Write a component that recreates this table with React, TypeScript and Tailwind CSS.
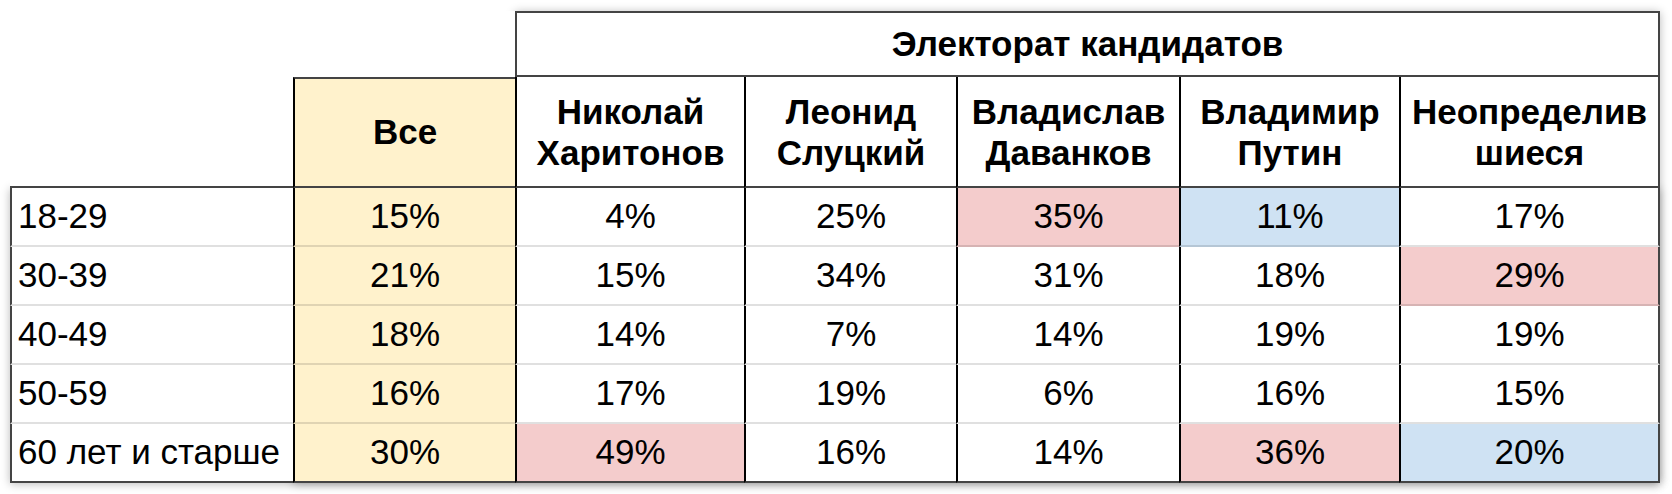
import React from 'react';

type Tone = 'pink' | 'blue' | undefined;

const candidates = [
  ['Николай', 'Харитонов'],
  ['Леонид', 'Слуцкий'],
  ['Владислав', 'Даванков'],
  ['Владимир', 'Путин'],
  ['Неопределив', 'шиеся'],
];

const rows: { age: string; all: string; values: [string, Tone][] }[] = [
  {
    age: '18-29',
    all: '15%',
    values: [['4%', undefined], ['25%', undefined], ['35%', 'pink'], ['11%', 'blue'], ['17%', undefined]],
  },
  {
    age: '30-39',
    all: '21%',
    values: [['15%', undefined], ['34%', undefined], ['31%', undefined], ['18%', undefined], ['29%', 'pink']],
  },
  {
    age: '40-49',
    all: '18%',
    values: [['14%', undefined], ['7%', undefined], ['14%', undefined], ['19%', undefined], ['19%', undefined]],
  },
  {
    age: '50-59',
    all: '16%',
    values: [['17%', undefined], ['19%', undefined], ['6%', undefined], ['16%', undefined], ['15%', undefined]],
  },
  {
    age: '60 лет и старше',
    all: '30%',
    values: [['49%', 'pink'], ['16%', undefined], ['14%', undefined], ['36%', 'pink'], ['20%', 'blue']],
  },
];

const toneClass = (tone: Tone) => {
  if (tone === 'pink') return 'bg-[#f4cccc]';
  if (tone === 'blue') return 'bg-[#cfe2f3]';
  return 'bg-white';
};

export default function App() {
  return (
    <div
      className="min-h-[494px] bg-white pl-[10px] pt-[11px] text-black"
      style={{ fontFamily: '"Liberation Sans", Arial, sans-serif' }}
    >
      <div className="grid grid-cols-[283px_222px_229px_212px_223px_220px_261px] grid-rows-[66px_111px_59px_59px_59px_59px_59px] text-[35px]">
        {/* shadow layers, painted under the cells */}
        <div className="col-start-3 col-span-5 row-start-1 row-span-7 shadow-[0_1px_9px_rgba(0,0,0,0.28)]" />
        <div className="col-start-2 row-start-2 row-span-6 shadow-[0_1px_9px_rgba(0,0,0,0.28)]" />
        <div className="col-start-1 col-span-7 row-start-3 row-span-5 shadow-[0_1px_9px_rgba(0,0,0,0.28)]" />

        {/* top-left blank area */}
        <div className="col-start-1 col-span-2 row-start-1 bg-white" />
        <div className="col-start-1 row-start-2 bg-white border-b-2 border-[#444]" />

        <div className="col-start-3 col-span-5 row-start-1 flex items-center justify-center border-2 border-[#444] bg-white font-bold">
          Электорат кандидатов
        </div>

        <div className="col-start-2 row-start-2 flex items-center justify-center border-t-2 border-b-2 border-l-2 border-t-[#444] border-b-[#444] border-l-black bg-[#fff2cc] font-bold">
          Все
        </div>

        {candidates.map((name, i) => (
          <div
            key={name[0]}
            className={`row-start-2 flex flex-col items-center justify-center border-b-2 border-l-2 border-b-[#444] border-l-black bg-white text-center font-bold leading-[41px] ${
              i === 4 ? 'border-r-2 border-r-[#444]' : ''
            }`}
            style={{ gridColumnStart: i + 3 }}
          >
            <span>{name[0]}</span>
            <span>{name[1]}</span>
          </div>
        ))}

        {rows.map((row, r) => {
          const last = r === rows.length - 1;
          const bottom = last ? 'border-b-2 border-b-[#444]' : 'border-b-2 border-b-black/[0.12]';
          return (
            <React.Fragment key={row.age}>
              <div
                className={`col-start-1 flex items-center border-l-2 border-l-[#444] bg-white pl-[6px] ${bottom}`}
                style={{ gridRowStart: r + 3 }}
              >
                {row.age}
              </div>
              <div
                className={`col-start-2 flex items-center justify-center border-l-2 border-l-black bg-[#fff2cc] ${bottom}`}
                style={{ gridRowStart: r + 3 }}
              >
                {row.all}
              </div>
              {row.values.map(([value, tone], i) => (
                <div
                  key={i}
                  className={`flex items-center justify-center border-l-2 border-l-black ${toneClass(tone)} ${bottom} ${
                    i === 4 ? 'border-r-2 border-r-[#444]' : ''
                  }`}
                  style={{ gridRowStart: r + 3, gridColumnStart: i + 3 }}
                >
                  {value}
                </div>
              ))}
            </React.Fragment>
          );
        })}
      </div>
    </div>
  );
}
